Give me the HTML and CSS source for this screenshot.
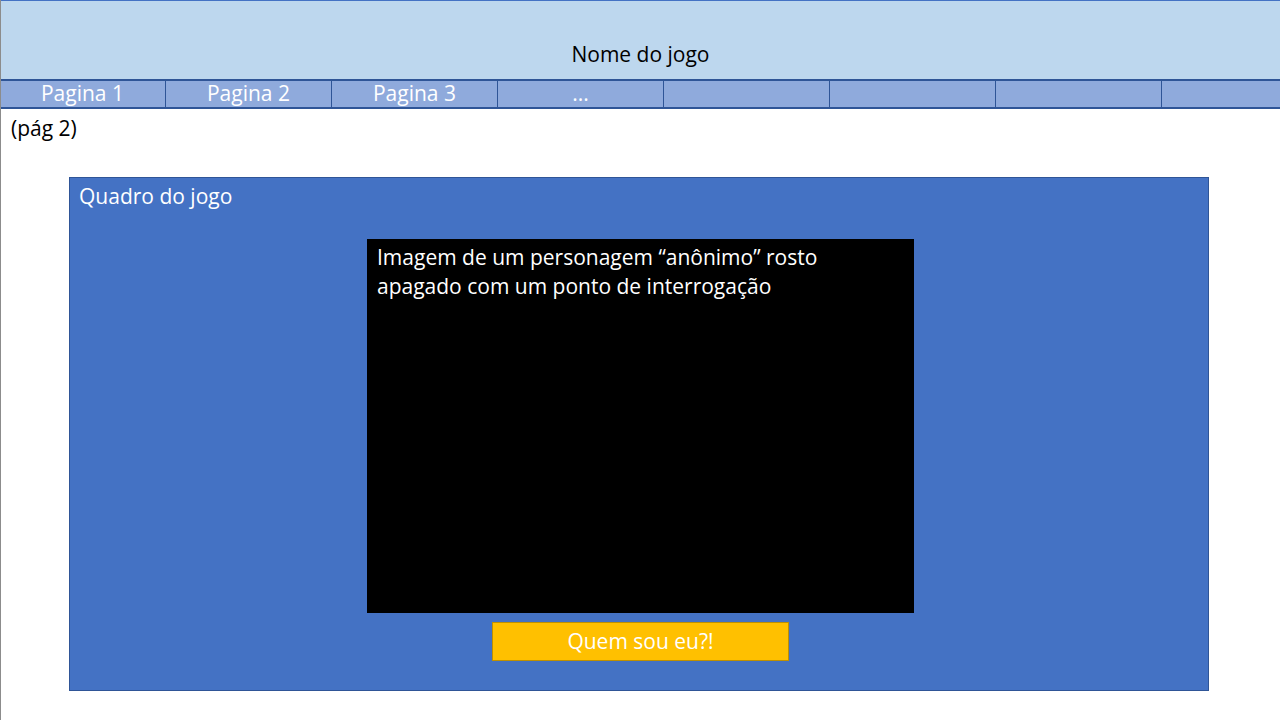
FILE: index.html
```html
<!DOCTYPE html>
<html lang="pt">
<head>
<meta charset="utf-8">
<title>Nome do jogo</title>
<link rel="stylesheet" href="styles.css">
</head>
<body>
<div class="page">
  <header class="header">
    <div class="title">Nome do jogo</div>
  </header>
  <nav class="nav">
    <div class="tab">Pagina 1</div>
    <div class="tab">Pagina 2</div>
    <div class="tab">Pagina 3</div>
    <div class="tab">...</div>
    <div class="tab"></div>
    <div class="tab"></div>
    <div class="tab"></div>
    <div class="tab last"></div>
  </nav>
  <div class="pagelabel">(pág 2)</div>
  <section class="frame">
    <div class="frame-title">Quadro do jogo</div>
    <div class="stage">
      <div class="picture">Imagem de um personagem “anônimo” rosto apagado com um ponto de interrogação</div>
      <div class="button">Quem sou eu?!</div>
    </div>
  </section>
</div>
</body>
</html>
```
FILE: styles.css
```css
html, body {
  margin: 0;
  padding: 0;
  background: #ffffff;
}
body {
  font-family: "Open Sans", Lato, "Liberation Sans", sans-serif;
  font-size: 21px;
  color: #000;
}
.page {
  width: 1280px;
  height: 720px;
  box-sizing: border-box;
  border-left: 1px solid #8c8c8c;
  display: flex;
  flex-direction: column;
  overflow: hidden;
}
.header {
  height: 79px;
  box-sizing: border-box;
  background: #bdd7ee;
  border-top: 1px solid #4472c4;
  display: flex;
  align-items: flex-end;
  justify-content: center;
  padding-bottom: 12px;
}
.title {
  line-height: 26px;
}
.nav {
  display: flex;
  height: 30px;
  box-sizing: border-box;
  background: #8faadc;
  border-top: 2px solid #2f5597;
  border-bottom: 2px solid #2f5597;
  margin-left: -1px;
}
.tab {
  width: 166px;
  box-sizing: border-box;
  border-right: 1px solid #2f5597;
  color: #ffffff;
  text-align: center;
  line-height: 25px;
}
.tab.last {
  flex: 1;
  border-right: none;
}
.pagelabel {
  padding: 5px 0 0 10px;
  line-height: 28px;
  height: 68px;
  box-sizing: border-box;
}
.frame {
  margin-left: 68px;
  width: 1140px;
  height: 514px;
  box-sizing: border-box;
  background: #4472c4;
  border: 1px solid #2f5597;
  padding: 4px 0 0 9px;
  display: flex;
  flex-direction: column;
}
.frame-title {
  color: #ffffff;
  line-height: 28px;
  height: 57px;
}
.stage {
  display: flex;
  flex-direction: column;
  align-items: center;
  padding-right: 6px;
}
.picture {
  width: 547px;
  height: 374px;
  box-sizing: border-box;
  background: #000000;
  color: #ffffff;
  padding: 4px 80px 0 10px;
  line-height: 29px;
}
.button {
  margin-top: 9px;
  width: 297px;
  height: 39px;
  box-sizing: border-box;
  background: #ffc000;
  border: 1px solid #bf9000;
  color: #ffffff;
  text-align: center;
  line-height: 36px;
}
```
